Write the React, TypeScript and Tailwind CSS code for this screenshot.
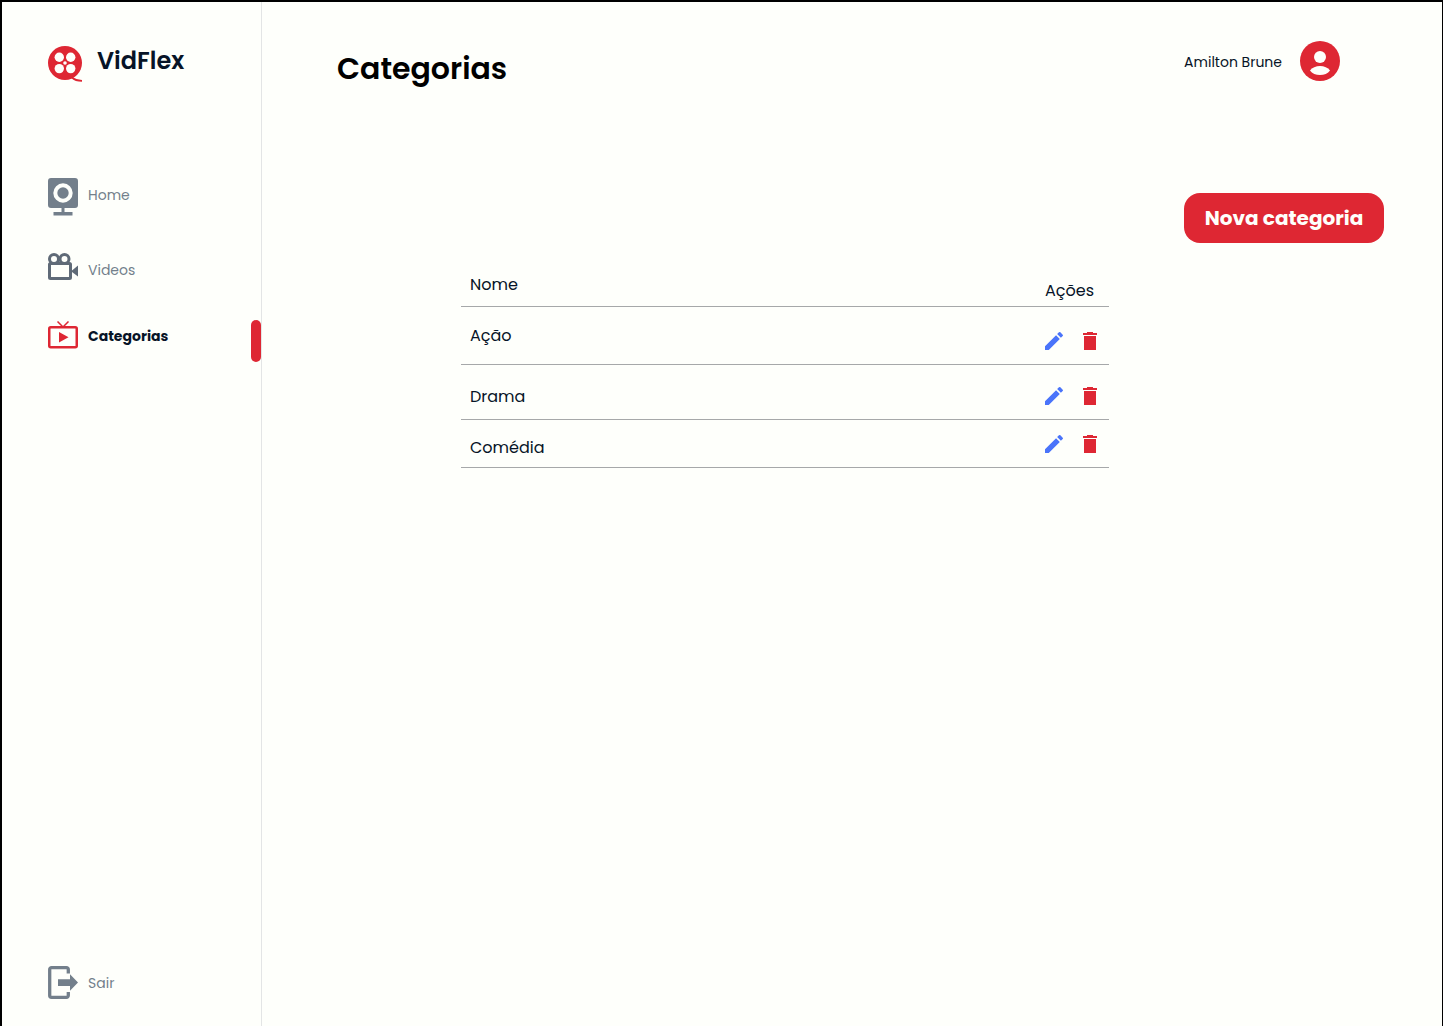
import React from "react";

type IconProps = { className?: string };

function ReelLogo() {
  return (
    <svg viewBox="0 0 34 36" className="h-9 w-[34px] shrink-0" aria-hidden="true">
      <circle cx="17" cy="17" r="17" fill="#de2733" />
      <path d="M24 31.500c2.500 2.500 5.500 3.300 10 3.300" fill="none" stroke="#de2733" strokeWidth="1.800" />
      <g fill="#fefffb">
        <circle cx="11.300" cy="11.200" r="4.700" />
        <circle cx="22.700" cy="11.200" r="4.700" />
        <circle cx="11.300" cy="22.600" r="4.700" />
        <circle cx="22.700" cy="22.600" r="4.700" />
        <circle cx="17" cy="17" r="1.800" />
      </g>
    </svg>
  );
}

function WebcamIcon() {
  return (
    <svg viewBox="0 0 30 38" className="h-[38px] w-[30px] shrink-0" fill="#737f8b" aria-hidden="true">
      <path fillRule="evenodd" d="M3 0h24a3 3 0 0 1 3 3v24a3 3 0 0 1-3 3H3a3 3 0 0 1-3-3V3a3 3 0 0 1 3-3zm12 5.300a9.700 9.700 0 1 0 0 19.400 9.700 9.700 0 0 0 0-19.400z" />
      <circle cx="15" cy="15" r="5.700" />
      <path d="M13.500 30h3v4h8v3.500h-19V34h8z" />
    </svg>
  );
}

function CameraIcon() {
  return (
    <svg viewBox="0 0 30 28" className="h-7 w-[30px] shrink-0" fill="none" stroke="#5f6a77" strokeWidth="3" aria-hidden="true">
      <circle cx="6" cy="6" r="4.500" />
      <circle cx="16.500" cy="6" r="4.500" />
      <rect x="1.500" y="10.500" width="21" height="15" rx="1" />
      <path d="M24 17.500l6-5v11l-6-4.500z" fill="#5f6a77" stroke="none" />
    </svg>
  );
}

function TvIcon() {
  return (
    <svg viewBox="0 0 30 28" className="h-7 w-[30px] shrink-0" fill="none" stroke="#de2733" aria-hidden="true">
      <rect x="1.250" y="6.250" width="27.500" height="20" rx="1.500" strokeWidth="2.500" />
      <path d="M9.500 .5l5.500 5.500 5.500-5.500" strokeWidth="1.500" />
      <path d="M11 11v10.500l9.500-5.250z" fill="#de2733" stroke="none" />
    </svg>
  );
}

function ExitIcon() {
  return (
    <svg viewBox="0 0 30 34" className="h-[34px] w-[30px] shrink-0" aria-hidden="true">
      <path d="M20.300 7.500V3.500a1.800 1.800 0 0 0-1.800-1.800H3.500a1.800 1.800 0 0 0-1.800 1.800v26a1.800 1.800 0 0 0 1.800 1.800h15a1.800 1.800 0 0 0 1.800-1.800v-3.500" fill="none" stroke="#737f8b" strokeWidth="3.300" />
      <path d="M10 13.300h12V8.300l8 8.200-8 8.200v-4.800H10z" fill="#737f8b" />
    </svg>
  );
}

function AvatarIcon() {
  return (
    <svg viewBox="0 0 40 40" className="size-10 shrink-0" aria-hidden="true">
      <circle cx="20" cy="20" r="20" fill="#de2733" />
      <circle cx="20" cy="16" r="6" fill="#fefffb" />
      <path d="M10 29.500c2-3 6-4.500 10-4.500s8 1.500 10 4.500c-2 3-6 4.500-10 4.500s-8-1.500-10-4.500z" fill="#fefffb" />
    </svg>
  );
}

function PencilIcon({ className }: IconProps) {
  return (
    <svg viewBox="0 0 24 24" className={className} fill="#4a74fa" aria-hidden="true">
      <path d="M3 17.250V21h3.750L17.810 9.940l-3.750-3.750L3 17.250zM20.710 7.040a1 1 0 0 0 0-1.410l-2.340-2.340a1 1 0 0 0-1.410 0l-1.830 1.830 3.750 3.750 1.830-1.830z" />
    </svg>
  );
}

function TrashIcon({ className }: IconProps) {
  return (
    <svg viewBox="0 0 24 24" className={className} fill="#de2733" aria-hidden="true">
      <path d="M6 7h12v14H6zM5 4h4V3h6v1h4v2H5z" />
    </svg>
  );
}

const categories = [
  { name: "Ação", cell: "h-[58px]", actions: "h-[58px] pt-2.5" },
  { name: "Drama", cell: "h-[55px] pt-2.5", actions: "h-[55px] pt-2" },
  { name: "Comédia", cell: "h-12 pt-2", actions: "h-12" },
];

export default function App() {
  return (
    <div className="flex min-h-screen border-t-2 border-r border-l-2 border-black bg-[#fefffb] font-['Poppins','Inter',sans-serif] text-[#071427]">
      <aside className="flex w-[260px] shrink-0 flex-col border-r border-[#e3e5e5] pt-11 pb-[26px] pl-[46px]">
        <a href="#" className="flex items-start gap-[15px]">
          <ReelLogo />
          <span className="text-2xl leading-[30px] font-semibold">VidFlex</span>
        </a>
        <nav className="mt-24 flex flex-col text-sm text-[#737f8b]">
          <a href="#home" className="flex h-[38px] items-center gap-2.5">
            <WebcamIcon />
            <span className="pb-1">Home</span>
          </a>
          <a href="#videos" className="mt-[35px] flex h-8 items-center gap-2.5">
            <CameraIcon />
            <span className="pt-1.5">Videos</span>
          </a>
          <a href="#categorias" aria-current="page" className="mt-[37px] flex items-start justify-between font-bold text-[#071427]">
            <span className="flex items-center gap-2.5 pt-px">
              <TvIcon />
              <span className="pt-0.5">Categorias</span>
            </span>
            <span className="h-[42px] w-2.5 rounded-full bg-[#de2733]" />
          </a>
        </nav>
        <a href="#sair" className="mt-auto flex items-center gap-2.5 text-sm text-[#737f8b]">
          <ExitIcon />
          <span>Sair</span>
        </a>
      </aside>

      <main className="flex min-w-0 flex-1 flex-col">
        <header className="flex items-start justify-between pt-[39px] pr-[102px] pl-[75px]">
          <h1 className="pt-2 text-[30px] leading-10 font-semibold text-black">Categorias</h1>
          <button type="button" className="flex items-center gap-[18px] text-sm">
            <span className="pt-0.5">Amilton Brune</span>
            <AvatarIcon />
          </button>
        </header>

        <button type="button" className="mt-[104px] mr-[58px] h-[50px] w-[200px] self-end rounded-2xl bg-[#de2733] text-xl font-bold text-[#fefffb]">
          Nova categoria
        </button>

        <table className="mt-6 mr-[333px] ml-[199px] border-separate border-spacing-0 text-base">
          <thead>
            <tr>
              <th scope="col" className="h-10 border-b border-[#a6a8a9] pb-1 pl-[9px] text-left font-normal">Nome</th>
              <th scope="col" className="h-10 w-[66px] border-b border-[#a6a8a9] pt-2 pl-0.5 text-left font-normal">Ações</th>
            </tr>
          </thead>
          <tbody>
            {categories.map((category) => (
              <tr key={category.name}>
                <td className={`border-b border-[#a6a8a9] pl-[9px] ${category.cell}`}>{category.name}</td>
                <td className={`border-b border-[#a6a8a9] ${category.actions}`}>
                  <div className="-ml-px flex items-center gap-3">
                    <button type="button" aria-label={`Editar ${category.name}`}>
                      <PencilIcon className="size-6" />
                    </button>
                    <button type="button" aria-label={`Excluir ${category.name}`}>
                      <TrashIcon className="size-6" />
                    </button>
                  </div>
                </td>
              </tr>
            ))}
          </tbody>
        </table>
      </main>
    </div>
  );
}
